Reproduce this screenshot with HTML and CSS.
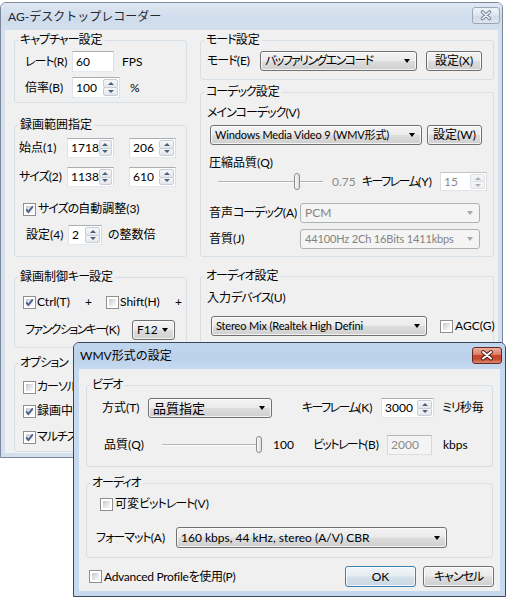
FILE: index.html
```html
<!DOCTYPE html>
<html lang="ja">
<head>
<meta charset="utf-8">
<title>AG-デスクトップレコーダー</title>
<link rel="stylesheet" href="styles.css">
</head>
<body>
<div class="desktop">

  <section class="win main">
    <header class="titlebar tb-main">
      <span class="title">AG-デスクトップレコーダー</span>
      <span class="close close-off">
        <svg width="26" height="15" viewBox="0 0 26 15"><path d="M9.5 4 L16.5 10.5 M16.5 4 L9.5 10.5" stroke="#7c8797" stroke-width="3.6" stroke-linecap="round"/><path d="M9.5 4 L16.5 10.5 M16.5 4 L9.5 10.5" stroke="#eef2f7" stroke-width="1.6" stroke-linecap="round"/></svg>
      </span>
    </header>
    <div class="client main-client">
      <div class="col">
        <fieldset class="grp g-capture">
          <legend><span class="kn">キャプチャー</span>設定</legend>
          <div class="gbody">
            <div class="row h21">
              <span class="lbl w47"><span class="kn">レート</span>(R)</span>
              <span class="tb w42">60</span>
              <span class="lbl ml8">FPS</span>
            </div>
            <div class="row h21 mt5">
              <span class="lbl w47">倍率(B)</span>
              <span class="spin w48"><span class="v">100</span><span class="arrows"><i class="up"></i><i class="dn"></i></span></span>
              <span class="lbl ml10">%</span>
            </div>
          </div>
        </fieldset>

        <fieldset class="grp g-range">
          <legend>録画範囲指定</legend>
          <div class="gbody">
            <div class="row">
              <span class="lbl w48">始点(1)</span>
              <span class="spin w47"><span class="v">1718</span><span class="arrows"><i class="up"></i><i class="dn"></i></span></span>
              <span class="spin w47 ml15"><span class="v">206</span><span class="arrows"><i class="up"></i><i class="dn"></i></span></span>
            </div>
            <div class="row mt9">
              <span class="lbl w48"><span class="kn">サイズ</span>(2)</span>
              <span class="spin w47"><span class="v">1138</span><span class="arrows"><i class="up"></i><i class="dn"></i></span></span>
              <span class="spin w47 ml15"><span class="v">610</span><span class="arrows"><i class="up"></i><i class="dn"></i></span></span>
            </div>
            <div class="row h14 mt15">
              <span class="chk on ml4"><svg viewBox="0 0 13 13"><path d="M3.2 6.4 L5.4 9 L9.8 3.4" fill="none" stroke="#4a5e8c" stroke-width="1.9"/></svg></span>
              <span class="lbl ml2"><span class="kn">サイズの</span>自動調整(3)</span>
            </div>
            <div class="row mt9">
              <span class="lbl ml7 w42">設定(4)</span>
              <span class="spin w34"><span class="v">2</span><span class="arrows"><i class="up"></i><i class="dn"></i></span></span>
              <span class="lbl ml6">の整数倍</span>
            </div>
          </div>
        </fieldset>

        <fieldset class="grp g-keys">
          <legend>録画制御<span class="kn">キー</span>設定</legend>
          <div class="gbody">
            <div class="row h14">
              <span class="cell w62">
                <span class="chk on"><svg viewBox="0 0 13 13"><path d="M3.2 6.4 L5.4 9 L9.8 3.4" fill="none" stroke="#4a5e8c" stroke-width="1.9"/></svg></span>
                <span class="lbl ml1">Ctrl(T)</span>
              </span>
              <span class="lbl w21">+</span>
              <span class="cell w69">
                <span class="chk"></span>
                <span class="lbl ml1">Shift(H)</span>
              </span>
              <span class="lbl">+</span>
            </div>
            <div class="row mt11">
              <span class="lbl ml2 w107"><span class="kn2">ファンクションキー</span>(K)</span>
              <span class="combo w43"><span class="txt">F12</span></span>
            </div>
          </div>
        </fieldset>

        <fieldset class="grp g-opts">
          <legend><span class="kn">オプション</span></legend>
          <div class="gbody">
            <div class="row h14">
              <span class="chk"></span>
              <span class="lbl ml1"><span class="kn">カーソル</span>を表示(C)</span>
            </div>
            <div class="row h14 mt10">
              <span class="chk on"><svg viewBox="0 0 13 13"><path d="M3.2 6.4 L5.4 9 L9.8 3.4" fill="none" stroke="#4a5e8c" stroke-width="1.9"/></svg></span>
              <span class="lbl ml1">録画中は最前面(F)</span>
            </div>
            <div class="row h14 mt12">
              <span class="chk on"><svg viewBox="0 0 13 13"><path d="M3.2 6.4 L5.4 9 L9.8 3.4" fill="none" stroke="#4a5e8c" stroke-width="1.9"/></svg></span>
              <span class="lbl ml1"><span class="kn">マルチスレッド</span>(M)</span>
            </div>
          </div>
        </fieldset>
      </div>

      <div class="col">
        <fieldset class="grp g-mode">
          <legend><span class="kn">モード</span>設定</legend>
          <div class="gbody">
            <div class="row">
              <span class="lbl w53"><span class="kn">モード</span>(E)</span>
              <span class="combo w157"><span class="txt kn2">バッファリングエンコード</span></span>
              <span class="btn ml9 w56">設定(X)</span>
            </div>
          </div>
        </fieldset>

        <fieldset class="grp g-codec">
          <legend><span class="kn">コーデック</span>設定</legend>
          <div class="gbody">
            <div class="row h14"><span class="lbl"><span class="kn">メインコーデック</span>(V)</span></div>
            <div class="row mt5">
              <span class="combo ml3 w212"><span class="txt lat">Windows Media Video 9 (WMV形式)</span></span>
              <span class="btn ml5 w55">設定(W)</span>
            </div>
            <div class="row h14 mt11"><span class="lbl ml2">圧縮品質(Q)</span></div>
            <div class="row h19 mt2">
              <span class="slider ml11 w105" style="--v:75%"><span class="track"></span><span class="thumb"></span></span>
              <span class="lbl dim ml9 w30">0.75</span>
              <span class="lbl w78"><span class="kn2">キーフレーム</span>(Y)</span>
              <span class="spin dis w47"><span class="v">15</span><span class="arrows"><i class="up"></i><i class="dn"></i></span></span>
            </div>
            <div class="row mt12">
              <span class="lbl ml2 w91">音声<span class="kn">コーデック</span>(A)</span>
              <span class="combo dis w180"><span class="txt">PCM</span></span>
            </div>
            <div class="row mt6">
              <span class="lbl ml2 w91">音質(J)</span>
              <span class="combo dis w180"><span class="txt lat">44100Hz 2Ch 16Bits 1411kbps</span></span>
            </div>
          </div>
        </fieldset>

        <fieldset class="grp g-audio">
          <legend><span class="kn">オーディオ</span>設定</legend>
          <div class="gbody">
            <div class="row h14"><span class="lbl">入力<span class="kn">デバイス</span>(U)</span></div>
            <div class="row mt11">
              <span class="combo ml4 w216"><span class="txt lat">Stereo Mix (Realtek High Defini</span></span>
              <span class="chk ml13"></span>
              <span class="lbl ml2">AGC(G)</span>
            </div>
          </div>
        </fieldset>
      </div>
    </div>
  </section>

  <section class="win dlg">
    <header class="titlebar tb-dlg">
      <span class="title">WMV形式の設定</span>
      <span class="close close-on">
        <svg width="28" height="15" viewBox="0 0 28 15"><path d="M10 4 L18 10.5 M18 4 L10 10.5" stroke="#4a1810" stroke-width="3.8" stroke-linecap="round"/><path d="M10 4 L18 10.5 M18 4 L10 10.5" stroke="#ffffff" stroke-width="2" stroke-linecap="round"/></svg>
      </span>
    </header>
    <div class="client dlg-client">
      <fieldset class="grp g-video">
        <legend><span class="kn">ビデオ</span></legend>
        <div class="gbody">
          <div class="row">
            <span class="lbl w46">方式(T)</span>
            <span class="combo big w124"><span class="txt">品質指定</span></span>
            <span class="lbl ml30 w79"><span class="kn2">キーフレーム</span>(K)</span>
            <span class="spin w53"><span class="v">3000</span><span class="arrows"><i class="up"></i><i class="dn"></i></span></span>
            <span class="lbl ml8"><span class="kn">ミリ</span>秒毎</span>
          </div>
          <div class="row mt17">
            <span class="lbl ml2 w58">品質(Q)</span>
            <span class="slider w97" style="--v:100%"><span class="track"></span><span class="thumb"></span></span>
            <span class="lbl ml14 w40">100</span>
            <span class="lbl w74"><span class="kn2">ビットレート</span>(B)</span>
            <span class="tb dis w45">2000</span>
            <span class="lbl ml11">kbps</span>
          </div>
        </div>
      </fieldset>

      <fieldset class="grp g-waudio">
        <legend><span class="kn">オーディオ</span></legend>
        <div class="gbody">
          <div class="row h14">
            <span class="chk ml4"></span>
            <span class="lbl ml2">可変<span class="kn">ビットレート</span>(V)</span>
          </div>
          <div class="row h21 mt16">
            <span class="lbl w80"><span class="kn">フォーマット</span>(A)</span>
            <span class="combo w271"><span class="txt">160 kbps, 44 kHz, stereo (A/V) CBR</span></span>
          </div>
        </div>
      </fieldset>

      <div class="row h21 dlg-foot">
        <span class="chk ml3"></span>
        <span class="lbl ml2 lat2">Advanced Profileを使用(P)</span>
        <span class="spacer"></span>
        <span class="btn default w71">OK</span>
        <span class="btn w71 ml7"><span class="kn">キャンセル</span></span>
      </div>
    </div>
  </section>

</div>
</body>
</html>
```

FILE: styles.css
```css
* { box-sizing: border-box; }
html, body { margin: 0; padding: 0; }
body {
  width: 507px; height: 604px; overflow: hidden; background: #ffffff;
  font-family: Lato, "Noto Sans CJK JP", sans-serif;
  font-size: 12px; line-height: 14px; color: #000;
  font-feature-settings: "palt" 1;
}
.desktop { position: relative; width: 507px; height: 604px; overflow: hidden; }

/* letter spacing for kana runs (narrow proportional UI font look) */
.kn { letter-spacing: -1px; }
.kn2 { letter-spacing: -1.6px; }
.lat { font-size: 11px; letter-spacing: -0.15px; }
.lat2 { letter-spacing: -0.3px; }

/* windows */
.win { position: absolute; display: flex; flex-direction: column; border: 1px solid; border-radius: 6px 6px 0 0; }
.main { left: 0; top: 2px; width: 503px; height: 456px; border-color: #7d899b; background: #d4e0ee; }
.dlg { left: 73px; top: 342px; width: 433px; height: 255px; border-color: #3b4758; background: #c6d9ef; }

.titlebar { display: flex; align-items: center; flex-shrink: 0; border-radius: 5px 5px 0 0; font-feature-settings: normal; }
.tb-main { height: 27px; padding: 0 2px 0 7px; background: linear-gradient(#dfe8f3, #cfdcec 60%, #d3dfed); color: #22272e; }
.tb-dlg { height: 26px; padding: 0 3px 0 6px; background: linear-gradient(#c0d5ee, #bcd2ec 60%, #c6d9ef); color: #000; }
.title { flex: 1; font-size: 12px; }
.close { display: flex; align-items: center; justify-content: center; border-radius: 3px; border: 1px solid; }
.close-off { width: 28px; height: 17px; margin-top: -3px; border-color: #9ba7b7; background: linear-gradient(#eef3f8, #dce5ef 50%, #d0dbe8 51%, #dbe4ee); }
.close-on { width: 30px; height: 17px; margin-top: -1px; border-color: #6a281d; background: linear-gradient(#eab0a2, #dc7a63 45%, #c8452c 50%, #c54a32 75%, #de8c74); }

.client { background: #f0f0f0; flex: 1; }
.main-client { margin: 0 4px 4px; display: grid; grid-template-columns: 173px 294px; column-gap: 13px; padding: 0 4px 0 9px; align-items: start; }
.dlg-client { margin: 0 5px 5px; display: flex; flex-direction: column; padding: 0 7px; }
.col { display: flex; flex-direction: column; }

/* group boxes */
.grp { margin: 0; padding: 0; min-width: 0; border: 1px solid #d5dfe5; border-radius: 3px; }
.grp legend { padding: 0 2px; margin-left: 3px; line-height: 14px; height: 14px; }
.g-capture { margin-top: 3px; height: 70px; }
.g-capture .gbody { padding: 4px 0 0 10px; }
.g-range { margin-top: 15px; height: 139px; }
.g-range .gbody { padding: 6px 0 0 4px; }
.g-keys { margin-top: 13px; height: 78px; }
.g-keys .gbody { padding: 11px 0 0 8px; }
.g-opts { margin-top: 8px; height: 96px; }
.g-opts .gbody { padding: 10px 0 0 8px; }
.g-mode { margin-top: 3px; height: 47px; }
.g-mode .gbody { padding: 4px 0 0 6px; }
.g-codec { margin-top: 5px; height: 172px; }
.g-codec .gbody { padding: 7px 0 0 6px; }
.g-audio { margin-top: 12px; height: 84px; }
.g-audio .gbody { padding: 8px 0 0 6px; }
.g-video { margin-top: 9px; height: 89px; }
.g-video .gbody { padding: 6px 0 0 15px; }
.g-waudio { margin-top: 9px; height: 82px; }
.g-waudio .gbody { padding: 7px 0 0 9px; }
.dlg-foot { margin-top: 8px; margin-right: -1px; }

/* rows */
.row { display: flex; align-items: center; height: 20px; white-space: nowrap; }
.row > * { flex-shrink: 0; }
.h14 { height: 14px; } .h19 { height: 19px; } .h21 { height: 21px; }
.cell { display: flex; align-items: center; }
.spacer { flex: 1; }
.lbl { display: inline-block; min-width: max-content; }
.dim { color: #8a8a8a; }

.mt2 { margin-top: 2px; } .mt5 { margin-top: 5px; } .mt6 { margin-top: 6px; } .mt9 { margin-top: 9px; }
.mt10 { margin-top: 10px; } .mt11 { margin-top: 11px; } .mt12 { margin-top: 12px; } .mt15 { margin-top: 15px; }
.mt16 { margin-top: 16px; } .mt17 { margin-top: 17px; }
.ml1 { margin-left: 1px; } .ml2 { margin-left: 2px; } .ml3 { margin-left: 3px; } .ml4 { margin-left: 4px; }
.ml5 { margin-left: 5px; } .ml6 { margin-left: 6px; } .ml7 { margin-left: 7px; } .ml8 { margin-left: 8px; }
.ml9 { margin-left: 9px; } .ml10 { margin-left: 10px; } .ml11 { margin-left: 11px; } .ml13 { margin-left: 13px; }
.ml14 { margin-left: 14px; } .ml15 { margin-left: 15px; } .ml30 { margin-left: 30px; }
.w21 { width: 21px; } .w30 { width: 30px; } .w34 { width: 34px; } .w40 { width: 40px; } .w42 { width: 42px; }
.w43 { width: 43px; } .w45 { width: 45px; } .w46 { width: 46px; } .w47 { width: 47px; } .w48 { width: 48px; }
.w53 { width: 53px; } .w55 { width: 55px; } .w56 { width: 56px; } .w58 { width: 58px; } .w62 { width: 62px; }
.w69 { width: 69px; } .w71 { width: 71px; } .w74 { width: 74px; } .w78 { width: 78px; } .w79 { width: 79px; }
.w80 { width: 80px; } .w91 { width: 91px; } .w97 { width: 97px; } .w105 { width: 105px; } .w107 { width: 107px; }
.w124 { width: 124px; } .w157 { width: 157px; } .w180 { width: 180px; } .w212 { width: 212px; } .w216 { width: 216px; }
.w271 { width: 271px; }

/* text box */
.tb { display: flex; align-items: center; height: 100%; padding: 0 3px; background: #fff;
  border: 1px solid; border-color: #abadb3 #dbdfe6 #e3e9ef #e2e3ea; }
.tb.dis { background: #f4f4f4; color: #8a8a8a; border-color: #b4b6ba #d6d8dc #dcdee2 #d6d8dc; }

/* spinner */
.spin { display: flex; height: 100%; background: #fff; padding: 1px;
  border: 1px solid; border-color: #abadb3 #dbdfe6 #e3e9ef #e2e3ea; }
.spin .v { flex: 1; display: flex; align-items: center; padding-left: 2px; }
.spin .arrows { width: 15px; display: flex; flex-direction: column; }
.spin .arrows i { flex: 1; display: flex; align-items: center; justify-content: center;
  border: 1px solid #c9ced6; border-radius: 2px; background: linear-gradient(#f6f7f9, #e3e7ec); }
.spin .arrows i + i { margin-top: -1px; }
.spin .up::after { content: ""; border-left: 3px solid transparent; border-right: 3px solid transparent; border-bottom: 3px solid #4f6079; }
.spin .dn::after { content: ""; border-left: 3px solid transparent; border-right: 3px solid transparent; border-top: 3px solid #4f6079; }
.spin.dis { color: #8a8a8a; background: #fff; border-color: #c3c5c9 #dadcdf #e0e2e5 #dadcdf; }
.spin.dis .arrows i { border-color: #dcdfe3; background: linear-gradient(#f7f7f8, #eeeff1); }
.spin.dis .up::after { border-bottom-color: #a9b0ba; }
.spin.dis .dn::after { border-top-color: #a9b0ba; }

/* combo / button */
.combo, .btn { display: flex; align-items: center; height: 100%; border: 1px solid #707070; border-radius: 3px;
  background: linear-gradient(#f3f3f3 0%, #ebebeb 48%, #dddddd 52%, #cfcfcf 100%);
  box-shadow: inset 0 0 0 1px rgba(255,255,255,0.75); }
.combo { padding: 0 6px 0 4px; }
.combo .txt { flex: 1; overflow: hidden; }
.combo::after { content: ""; margin-left: 4px; border-left: 3.5px solid transparent; border-right: 3.5px solid transparent; border-top: 4px solid #000; }
.combo.big { font-size: 13px; }
.combo.dis { border-color: #adb2b5; background: #f4f4f4; box-shadow: none; color: #838383; }
.combo.dis::after { border-top-color: #a8a8a8; }
.btn { justify-content: center; }
.btn.default { border-color: #3c7fb1; background: linear-gradient(#f1f6fa 0%, #e4ecf2 48%, #d5e1ea 52%, #c9d8e4 100%); }

/* checkbox */
.chk { position: relative; width: 13px; height: 13px; border: 1px solid #8e8f8f; background: #fff; padding: 2px; }
.chk::before { content: ""; display: block; width: 100%; height: 100%; background: linear-gradient(135deg, #c4c9cf, #eceef0 70%, #f6f6f6); }
.chk svg { position: absolute; left: -1px; top: -1px; width: 13px; height: 13px; }

/* slider */
.slider { position: relative; display: flex; align-items: center; height: 100%; }
.slider .track { width: 100%; height: 2px; border-top: 1px solid #b3b3b3; border-bottom: 1px solid #fdfdfd; background: #e4e4e4; }
.slider .thumb { position: absolute; top: 50%; left: calc(var(--v) - 3px); width: 6px; height: 17px; margin-top: -9px;
  border: 1px solid #8c8c8c; border-radius: 3px; background: linear-gradient(90deg, #fafafa, #dcdcdc); }
```
